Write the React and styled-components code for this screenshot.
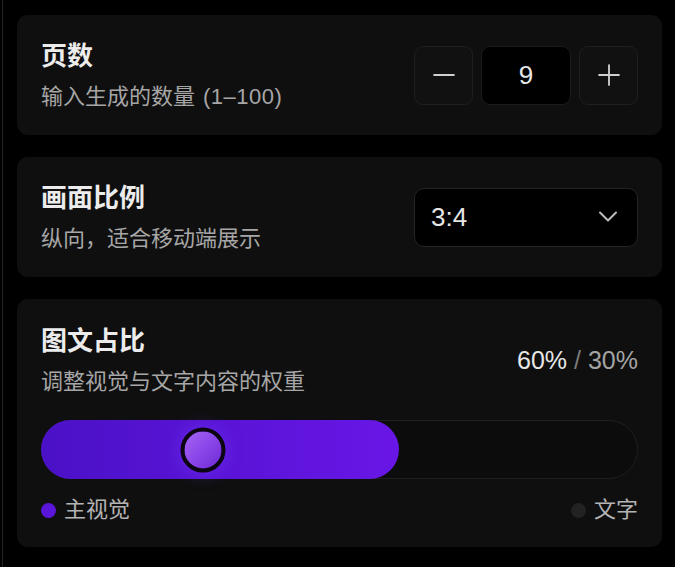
import React from 'react';
import styled, { createGlobalStyle } from 'styled-components';
import { Minus, Plus } from 'lucide-react';

const GlobalStyle = createGlobalStyle`
    body {
        margin: 0;
        background: #000;
        font-family: "Liberation Sans", "Noto Sans CJK SC", sans-serif;
    }
`

const Panel = styled.div`
    margin-left: 2px;
    border-left: 1px solid #242424;
    padding: 15px 13px 20px 14px;
    display: flex;
    flex-direction: column;
    gap: 22px;
    min-height: 532px;
`

const Card = styled.div`
    background: #0f0f0f;
    border-radius: 11px;
    padding: ${props => props.$tall ? '25px 24px 22px' : '0 24px'};
    height: ${props => props.$tall ? 'auto' : '120px'};
    box-sizing: border-box;
    display: flex;
    flex-direction: column;
    justify-content: center;
`

const Row = styled.div`
    display: flex;
    align-items: center;
    justify-content: space-between;
`

const Title = styled.div`
    font-size: 26px;
    line-height: 34px;
    font-weight: 700;
    color: #ececec;
`

const Hint = styled.div`
    margin-top: 9px;
    font-size: 22px;
    line-height: 30px;
    color: #a6a6a6;
    .paren {
        margin-left: 8px;
        letter-spacing: 0.5px;
    }
`

const Stepper = styled.div`
    display: flex;
    gap: 8px;
`

const StepButton = styled.button`
    width: 59px;
    height: 59px;
    box-sizing: border-box;
    border-radius: 9px;
    border: 1px solid #1f1f1f;
    background: #111;
    color: #cfcfcf;
    display: flex;
    align-items: center;
    justify-content: center;
    padding: 0;
`

const StepValue = styled.div`
    width: 90px;
    height: 59px;
    box-sizing: border-box;
    border-radius: 9px;
    border: 1px solid #1c1c1c;
    background: #000;
    color: #e6e6e6;
    font-size: 26px;
    display: flex;
    align-items: center;
    justify-content: center;
`

const Select = styled.div`
    width: 224px;
    height: 59px;
    box-sizing: border-box;
    border-radius: 10px;
    border: 1px solid #242424;
    background: #000;
    color: #e6e6e6;
    font-size: 26px;
    display: flex;
    align-items: center;
    justify-content: space-between;
    padding: 0 19px 0 16px;
`

const Ratio = styled.div`
    font-size: 25px;
    color: #e6e6e6;
    span {
        color: #a3a3a3;
    }
    .slash {
        color: #7a7a7a;
    }
`

const Track = styled.div`
    position: relative;
    margin-top: 23px;
    height: 59px;
    box-sizing: border-box;
    border-radius: 30px;
    border: 1px solid #1f1f1f;
    background: #0c0c0c;
`

const Fill = styled.div`
    position: absolute;
    top: -1px;
    bottom: -1px;
    left: -1px;
    border-radius: 30px;
    background: linear-gradient(90deg, #4a11c6 0%, #5a14d6 50%, #6916e6 100%);
`

const Thumb = styled.div`
    position: absolute;
    top: 50%;
    width: 45px;
    height: 45px;
    box-sizing: border-box;
    border-radius: 50%;
    border: 4px solid #0b0612;
    transform: translate(-50%, -50%);
    background: linear-gradient(135deg, #a766f5 0%, #8a46e8 50%, #6e2ad4 100%);
    box-shadow: 0 0 16px 2px rgba(120, 70, 255, 0.35);
`

const Legend = styled.div`
    margin-top: 16px;
    display: flex;
    justify-content: space-between;
`

const LegendItem = styled.div`
    display: flex;
    align-items: center;
    gap: 8px;
    font-size: 22px;
    line-height: 30px;
    color: #b4b4b4;
`

const Dot = styled.span`
    width: 15px;
    height: 15px;
    border-radius: 50%;
    background: ${props => props.$color};
`

const Chevron = () => (
    <svg width="20" height="12" viewBox="0 0 20 12" fill="none">
        <path d="M2 1.5 L10 9.5 L18 1.5" stroke="#bdbdbd" strokeWidth="2" strokeLinecap="round" strokeLinejoin="round" />
    </svg>
)

const App = () => {
    const visual = 60
    const text = 30
    const thumb = 27

    return(
        <>
        <GlobalStyle/>
        <Panel>
            <Card>
                <Row>
                    <div>
                        <Title>页数</Title>
                        <Hint>输入生成的数量<span className='paren'>(1–100)</span></Hint>
                    </div>
                    <Stepper>
                        <StepButton><Minus size={34} strokeWidth={1.3}/></StepButton>
                        <StepValue>9</StepValue>
                        <StepButton><Plus size={34} strokeWidth={1.3}/></StepButton>
                    </Stepper>
                </Row>
            </Card>
            <Card>
                <Row>
                    <div>
                        <Title>画面比例</Title>
                        <Hint>纵向，适合移动端展示</Hint>
                    </div>
                    <Select>
                        3:4
                        <Chevron/>
                    </Select>
                </Row>
            </Card>
            <Card $tall>
                <Row>
                    <div>
                        <Title>图文占比</Title>
                        <Hint>调整视觉与文字内容的权重</Hint>
                    </div>
                    <Ratio>{visual}% <span className='slash'>/</span> <span>{text}%</span></Ratio>
                </Row>
                <Track>
                    <Fill style={{ width: `calc(${visual}% + 1px)` }}/>
                    <Thumb style={{ left: `${thumb}%` }}/>
                </Track>
                <Legend>
                    <LegendItem><Dot $color='#5a16d8'/>主视觉</LegendItem>
                    <LegendItem><Dot $color='#222'/>文字</LegendItem>
                </Legend>
            </Card>
        </Panel>
        </>
    )
}

export default App;
